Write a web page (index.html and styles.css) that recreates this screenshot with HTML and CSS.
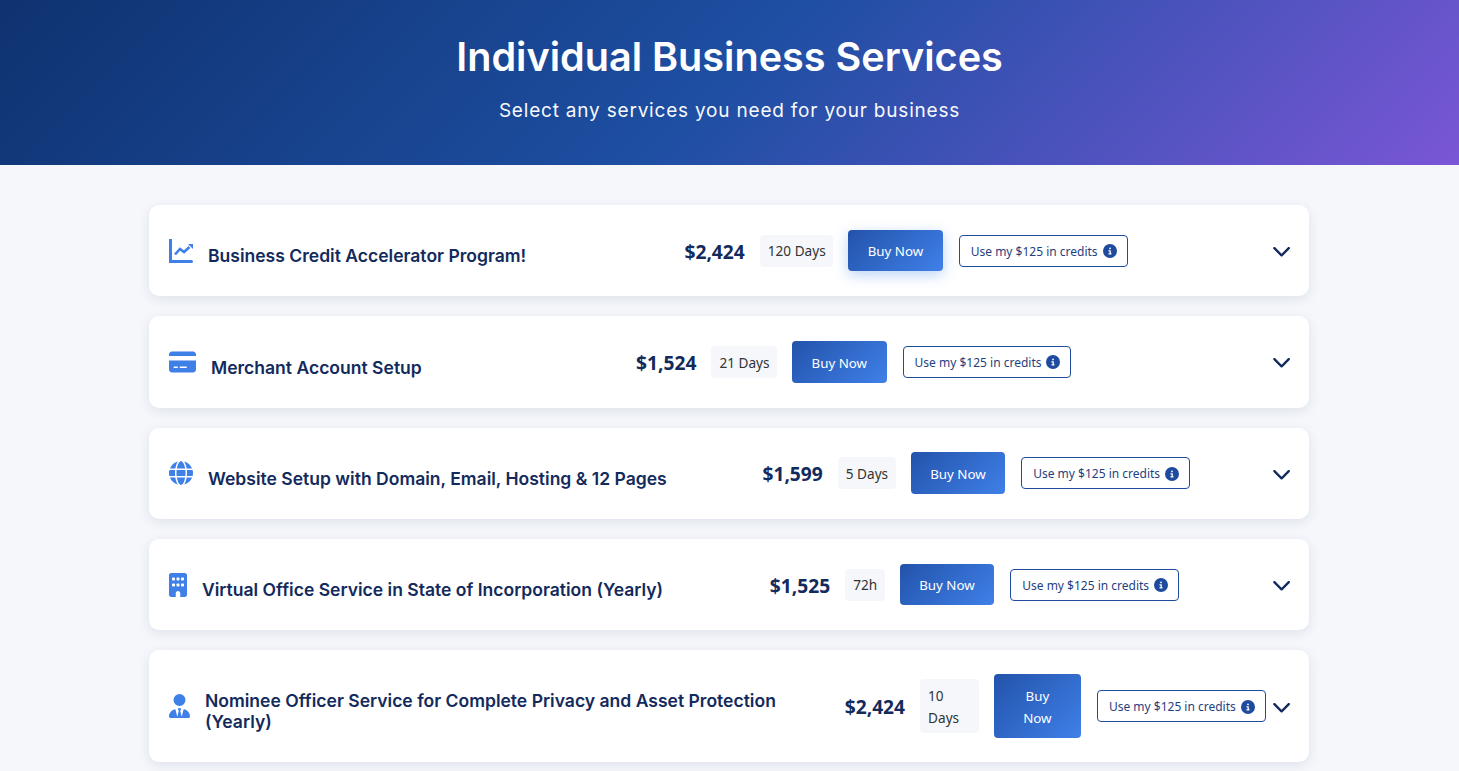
FILE: index.html
```html
<!DOCTYPE html>
<html lang="en">
<head>
    <meta charset="UTF-8">
    <meta name="viewport" content="width=device-width, initial-scale=1.0">
    <title>Individual Business Services</title>
    <link rel="stylesheet" href="styles.css">
</head>
<body>
    <svg class="sprites" aria-hidden="true">
        <symbol id="icon-info" viewBox="0 0 512 512">
            <path d="M256 512A256 256 0 1 0 256 0a256 256 0 1 0 0 512zM216 336h24V272H216c-13.3 0-24-10.7-24-24s10.7-24 24-24h48c13.3 0 24 10.7 24 24v88h8c13.3 0 24 10.7 24 24s-10.7 24-24 24H216c-13.3 0-24-10.7-24-24s10.7-24 24-24zm40-208a32 32 0 1 1 0 64 32 32 0 1 1 0-64z"/>
        </symbol>
        <symbol id="icon-chevron" viewBox="0 0 512 512">
            <path d="M233.4 406.6c12.5 12.5 32.8 12.5 45.3 0l192-192c12.5-12.5 12.5-32.8 0-45.3s-32.8-12.5-45.3 0L256 338.7 86.6 169.4c-12.5-12.5-32.8-12.5-45.3 0s-12.5 32.8 0 45.3l192 192z"/>
        </symbol>
    </svg>

    <header class="hero">
        <h1>Individual Business Services</h1>
        <p>Select any services you need for your business</p>
    </header>

    <main class="container">
        <!-- Business credit -->
        <section class="service-card">
            <div class="service-info">
                <svg class="service-icon icon-w24" viewBox="0 0 24 24"><path d="M0 0h3v21h19.5a1.5 1.5 0 0 1 0 3H0z"/><path d="M19 5h5v5z"/><path class="chart-stroke" d="M6 15.5l5-5.5 4 3 5.5-5"/></svg>
                <h3>Business Credit Accelerator Program!</h3>
            </div>
            <div class="service-actions">
                <span class="price">$2,424</span>
                <span class="days">120 Days</span>
                <button class="buy-btn buy-btn-hover">Buy Now</button>
                <button class="credit-btn">Use my $125 in credits <svg class="info-icon"><use href="#icon-info"/></svg></button>
            </div>
            <button class="toggle-btn"><svg><use href="#icon-chevron"/></svg></button>
        </section>

        <!-- Merchant account -->
        <section class="service-card">
            <div class="service-info">
                <svg class="service-icon icon-w27" viewBox="0 0 576 512"><path d="M64 32C28.7 32 0 60.7 0 96v32H576V96c0-35.3-28.7-64-64-64H64zM576 224H0V416c0 35.3 28.7 64 64 64H512c35.3 0 64-28.7 64-64V224zM112 352h64c8.8 0 16 7.2 16 16s-7.2 16-16 16H112c-8.8 0-16-7.2-16-16s7.2-16 16-16zm112 16c0-8.8 7.2-16 16-16H368c8.8 0 16 7.2 16 16s-7.2 16-16 16H240c-8.8 0-16-7.2-16-16z"/></svg>
                <h3>Merchant Account Setup</h3>
            </div>
            <div class="service-actions">
                <span class="price">$1,524</span>
                <span class="days">21 Days</span>
                <button class="buy-btn">Buy Now</button>
                <button class="credit-btn">Use my $125 in credits <svg class="info-icon"><use href="#icon-info"/></svg></button>
            </div>
            <button class="toggle-btn"><svg><use href="#icon-chevron"/></svg></button>
        </section>

        <!-- Website -->
        <section class="service-card">
            <div class="service-info">
                <svg class="service-icon icon-w24" viewBox="0 0 512 512"><path d="M352 256c0 22.2-1.2 43.6-3.3 64H163.3c-2.2-20.4-3.3-41.8-3.3-64s1.2-43.6 3.3-64H348.7c2.2 20.4 3.3 41.8 3.3 64zm28.8-64H503.9c5.3 20.5 8.1 41.9 8.1 64s-2.8 43.5-8.1 64H380.8c2.1-20.6 3.2-42 3.2-64s-1.1-43.4-3.2-64zm112.6-32H376.7c-10-63.9-29.8-117.4-55.3-151.6c78.3 20.7 142 77.5 171.9 151.6zm-149.1 0H167.7c6.1-36.4 15.5-68.6 27-94.7c10.5-23.6 22.2-40.7 33.5-51.5C239.4 3.2 248.7 0 256 0s16.6 3.2 27.8 13.8c11.3 10.8 23 27.9 33.5 51.5c11.6 26 20.9 58.2 27 94.7zm-209 0H18.6C48.6 85.9 112.2 29.1 190.6 8.4C165.1 42.6 145.3 96.1 135.3 160zM8.1 192H131.2c-2.1 20.6-3.2 42-3.2 64s1.1 43.4 3.2 64H8.1C2.8 299.5 0 278.1 0 256s2.8-43.5 8.1-64zM194.7 446.6c-11.6-26-20.9-58.2-27-94.6H344.3c-6.1 36.4-15.5 68.6-27 94.6c-10.5 23.6-22.2 40.7-33.5 51.5C272.6 508.8 263.3 512 256 512s-16.6-3.2-27.8-13.8c-11.3-10.8-23-27.9-33.5-51.5zM135.3 352c10 63.9 29.8 117.4 55.3 151.6C112.2 482.9 48.6 426.1 18.6 352H135.3zm358.1 0c-30 74.1-93.6 130.9-171.9 151.6c25.5-34.2 45.2-87.7 55.3-151.6H493.4z"/></svg>
                <h3>Website Setup with Domain, Email, Hosting &amp; 12 Pages</h3>
            </div>
            <div class="service-actions">
                <span class="price">$1,599</span>
                <span class="days">5 Days</span>
                <button class="buy-btn">Buy Now</button>
                <button class="credit-btn">Use my $125 in credits <svg class="info-icon"><use href="#icon-info"/></svg></button>
            </div>
            <button class="toggle-btn"><svg><use href="#icon-chevron"/></svg></button>
        </section>

        <!-- Virtual office -->
        <section class="service-card">
            <div class="service-info">
                <svg class="service-icon icon-w18" viewBox="0 0 384 512"><path d="M48 0C21.5 0 0 21.5 0 48V464c0 26.5 21.5 48 48 48h96V432c0-26.5 21.5-48 48-48s48 21.5 48 48v80h96c26.5 0 48-21.5 48-48V48c0-26.5-21.5-48-48-48H48zM64 240c0-8.8 7.2-16 16-16h32c8.8 0 16 7.2 16 16v32c0 8.8-7.2 16-16 16H80c-8.8 0-16-7.2-16-16V240zm112-16h32c8.8 0 16 7.2 16 16v32c0 8.8-7.2 16-16 16H176c-8.8 0-16-7.2-16-16V240c0-8.8 7.2-16 16-16zm80 16c0-8.8 7.2-16 16-16h32c8.8 0 16 7.2 16 16v32c0 8.8-7.2 16-16 16H272c-8.8 0-16-7.2-16-16V240zM80 96h32c8.8 0 16 7.2 16 16v32c0 8.8-7.2 16-16 16H80c-8.8 0-16-7.2-16-16V112c0-8.8 7.2-16 16-16zm80 16c0-8.8 7.2-16 16-16h32c8.8 0 16 7.2 16 16v32c0 8.8-7.2 16-16 16H176c-8.8 0-16-7.2-16-16V112zM272 96h32c8.8 0 16 7.2 16 16v32c0 8.8-7.2 16-16 16H272c-8.8 0-16-7.2-16-16V112c0-8.8 7.2-16 16-16z"/></svg>
                <h3>Virtual Office Service in State of Incorporation (Yearly)</h3>
            </div>
            <div class="service-actions">
                <span class="price">$1,525</span>
                <span class="days">72h</span>
                <button class="buy-btn">Buy Now</button>
                <button class="credit-btn">Use my $125 in credits <svg class="info-icon"><use href="#icon-info"/></svg></button>
            </div>
            <button class="toggle-btn"><svg><use href="#icon-chevron"/></svg></button>
        </section>

        <!-- Nominee officer -->
        <section class="service-card">
            <div class="service-info">
                <svg class="service-icon icon-w21" viewBox="0 0 448 512"><path d="M96 128a128 128 0 1 0 256 0A128 128 0 1 0 96 128zm94.5 200.2l18.6 31L175.8 483.1l-36-146.9c-2-8.1-9.8-13.4-17.9-11.3C51.9 342.4 0 405.8 0 481.3c0 17 13.8 30.7 30.7 30.7H162.5c0 0 0 0 .1 0H168 280h5.5c0 0 0 0 .1 0H417.3c17 0 30.7-13.8 30.7-30.7c0-75.5-51.9-138.9-121.9-156.4c-8.1-2-15.9 3.3-17.9 11.3l-36 146.9L238.9 359.2l18.6-31c6.4-10.7-1.3-24.2-13.7-24.2H224 204.3c-12.4 0-20.1 13.6-13.7 24.2z"/></svg>
                <h3>Nominee Officer Service for Complete Privacy and Asset Protection (Yearly)</h3>
            </div>
            <div class="service-actions">
                <span class="price">$2,424</span>
                <span class="days">10 Days</span>
                <button class="buy-btn">Buy Now</button>
                <button class="credit-btn">Use my $125 in credits <svg class="info-icon"><use href="#icon-info"/></svg></button>
            </div>
            <button class="toggle-btn"><svg><use href="#icon-chevron"/></svg></button>
        </section>
    </main>
</body>
</html>
```

FILE: styles.css
```css
* {
    box-sizing: border-box;
}
body {
    margin: 0;
    font-family: "Noto Sans", "Open Sans", sans-serif;
    background-color: #f5f7fb;
    color: #333;
}
.sprites {
    display: none;
}
.hero {
    height: 165px;
    padding-top: 33px;
    text-align: center;
    color: #fff;
    background: linear-gradient(135deg, #0f3270 0%, #1e4fa3 50%, #7a56d6 100%);
}
.hero h1 {
    margin: 0;
    font-family: Inter, sans-serif;
    font-size: 39.6px;
    line-height: 48px;
    font-weight: 600;
}
.hero p {
    margin: 17px 0 0;
    font-family: Inter, sans-serif;
    font-size: 19px;
    line-height: 26px;
    letter-spacing: 0.8px;
    opacity: 0.97;
}
.container {
    max-width: 1161px;
    margin: 0 auto;
    padding: 40px 1px 9px 0;
    display: flex;
    flex-direction: column;
    gap: 20px;
}
.service-card {
    display: flex;
    align-items: center;
    justify-content: space-between;
    padding: 24px 20px;
    background-color: #fff;
    border-radius: 10px;
    box-shadow: 0 3px 12px rgba(20, 40, 90, 0.1);
}
.service-info {
    display: flex;
    align-items: center;
    gap: 15px;
    min-height: 43.3px;
    padding-right: 20px;
}
.service-icon {
    flex-shrink: 0;
    height: 24px;
    fill: #3f7fe8;
}
.chart-stroke {
    fill: none;
    stroke: #3f7fe8;
    stroke-width: 2.6;
}
.icon-w18 { width: 18px; }
.icon-w21 { width: 21px; }
.icon-w24 { width: 24px; }
.icon-w27 { width: 27px; }
.service-info h3 {
    margin: 10.6px 0 0;
    font-family: Inter, sans-serif;
    font-size: 17.55px;
    line-height: 21px;
    font-weight: 600;
    color: #132a5c;
}
.service-actions {
    display: flex;
    align-items: center;
    gap: 15px;
}
.price {
    padding-top: 1px;
    font-size: 19.2px;
    font-weight: 700;
    color: #132a5c;
    white-space: nowrap;
}
.days {
    padding: 5.8px 7.5px 3.8px 8px;
    font-size: 13.6px;
    line-height: 22.4px;
    color: #333;
    background-color: #f5f7fb;
    border-radius: 4px;
}
.buy-btn {
    padding: 10.6px 19.5px 8.6px;
    font-family: inherit;
    font-size: 13.33px;
    line-height: 22.4px;
    color: #fff;
    background: linear-gradient(135deg, #2353ab 0%, #3f80e8 100%);
    border: none;
    border-radius: 4px;
    cursor: pointer;
}
.buy-btn-hover {
    box-shadow: 0 4px 14px rgba(63, 128, 232, 0.35);
}
.credit-btn {
    display: flex;
    align-items: center;
    gap: 5px;
    height: 32px;
    margin-left: 1px;
    padding: 1px 10px 0 11px;
    font-family: inherit;
    font-size: 12px;
    color: #1e3f80;
    white-space: nowrap;
    background-color: #fff;
    border: 1px solid #1e4b9e;
    border-radius: 4px;
    cursor: pointer;
}
.info-icon {
    width: 14px;
    height: 14px;
    fill: #1e4b9e;
}
.toggle-btn {
    flex-shrink: 0;
    margin: 0 -2px 0 6px;
    padding: 0;
    width: 19.2px;
    height: 19.2px;
    color: #132a5c;
    background: none;
    border: none;
    cursor: pointer;
}
.toggle-btn svg {
    display: block;
    width: 19.2px;
    height: 19.2px;
    fill: currentColor;
}
```
